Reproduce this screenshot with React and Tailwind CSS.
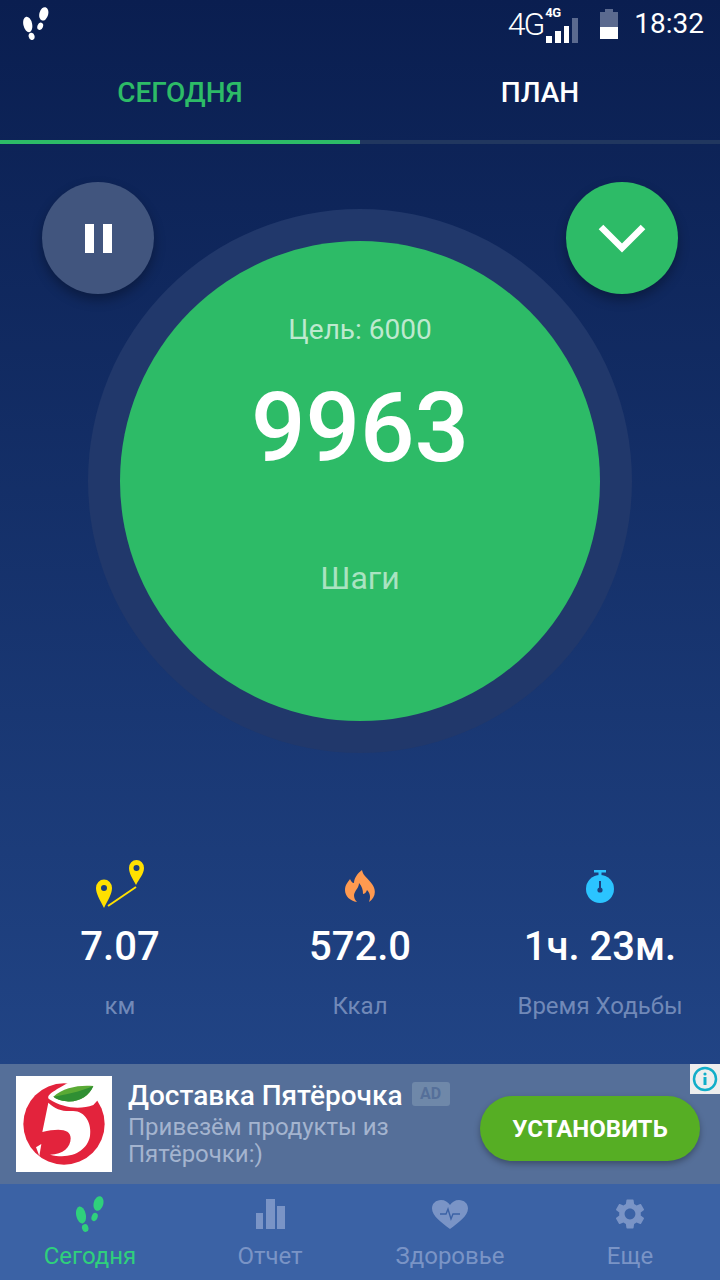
import { MdSettings } from "react-icons/md";

function Steps({ className }) {
  return (
    <svg viewBox="0 0 28 36" className={className} fill="currentColor">
      <ellipse cx="5" cy="19" rx="4.8" ry="8.6" transform="rotate(-12 5 19)" />
      <ellipse cx="9.2" cy="32" rx="3.2" ry="4" transform="rotate(-15 9.2 32)" />
      <ellipse cx="22.5" cy="7.5" rx="4.8" ry="7.5" transform="rotate(15 22.5 7.5)" />
      <ellipse cx="18.6" cy="21" rx="3" ry="4.2" transform="rotate(20 18.6 21)" />
    </svg>
  );
}

function Logo() {
  return (
    <svg viewBox="48 48 288 288" className="w-24 h-24 shrink-0 bg-white">
      <circle cx="192" cy="192" r="122" fill="#e3233c" />
      <path d="M150 70 C180 62 235 60 330 80 L280 135 C240 150 190 145 148 118 C138 108 150 98 205 68 Z" fill="#fff" />
      <path d="M145 128 C165 148 190 155 215 153 C255 150 276 190 270 228 C262 272 215 300 150 284 C190 284 212 262 212 235 C212 208 180 203 127 216 Z" fill="#fff" />
      <path d="M108 262 L124 252 L118 288 Z" fill="#fff" />
      <path d="M160 110 C190 82 240 74 280 78 C268 108 235 128 200 124 C182 122 170 118 160 110 Z" fill="#5aaa35" />
      <path d="M160 110 C195 105 240 95 280 78 C268 108 235 128 200 124 C182 122 170 118 160 110 Z" fill="#2f8f33" />
    </svg>
  );
}

function Stat({ icon, value, label }) {
  return (
    <div className="flex flex-col items-center">
      <div className="h-12 flex items-end justify-center">{icon}</div>
      <div className="mt-[15px] text-[40px] leading-[48px] font-medium text-white">{value}</div>
      <div className="mt-[19px] text-2xl leading-8 text-[#7189b8]">{label}</div>
    </div>
  );
}

function NavItem({ icon, label, active }) {
  return (
    <div className={`flex flex-col items-center ${active ? "text-[#2fd07c]" : "text-[#7a94c6]"}`}>
      <div className="h-[38px] flex items-center justify-center">{icon}</div>
      <div className="mt-[7px] text-2xl leading-8">{label}</div>
    </div>
  );
}

export default function App() {
  return (
    <div className="w-[720px] h-[1280px] flex flex-col overflow-hidden font-[Roboto,sans-serif] bg-gradient-to-b from-[#0a1e50] to-[#264c90]">
      {/* Status bar */}
      <div className="h-12 flex items-center justify-between pl-[22px] pr-4 text-white">
        <Steps className="w-7 h-[33px] mt-[-1px]" />
        <div className="flex items-center">
          <span className="text-[32px] leading-none font-light tracking-[-2px] mr-[2px]">4G</span>
          <div className="relative w-[38px] h-9">
            <span className="absolute left-0 top-0 text-[13px] leading-none font-bold tracking-[-0.5px]">4G</span>
            <div className="absolute left-[1px] bottom-[-1px] flex items-end gap-[3px]">
              <div className="w-[6px] h-[7px] bg-white" />
              <div className="w-[6px] h-[12px] bg-white" />
              <div className="w-[5px] h-[17px] bg-white" />
              <div className="w-[6px] h-[25px] bg-[#5b6a8f]" />
            </div>
          </div>
          <div className="ml-[17px] w-[18px] h-[30px] flex flex-col items-center">
            <div className="w-2 h-[3px] bg-[#5b6a8f]" />
            <div className="w-full h-[15px] bg-[#5b6a8f]" />
            <div className="w-full h-3 bg-white" />
          </div>
          <span className="ml-4 text-[28px] leading-none">18:32</span>
        </div>
      </div>

      {/* Tabs */}
      <div className="h-24 grid grid-cols-2 shrink-0">
        <div className="flex items-center justify-center pb-[3px] border-b-4 border-[#2dbb67] text-[28px] font-medium text-[#2dbb67]">
          СЕГОДНЯ
        </div>
        <div className="flex items-center justify-center pb-[3px] border-b-4 border-[#21375f] text-[28px] font-medium text-white">
          ПЛАН
        </div>
      </div>

      {/* Hero */}
      <div className="relative flex justify-center pt-[65px]">
        <div className="w-[544px] h-[544px] rounded-full bg-[#21386b] flex items-center justify-center">
          <div className="w-[480px] h-[480px] rounded-full bg-[#2dbb67] flex flex-col items-center text-white">
            <div className="mt-[71px] text-[28px] leading-9 text-white/70">Цель: 6000</div>
            <div className="mt-[24px] text-[96px] leading-[112px] font-medium">9963</div>
            <div className="mt-[74px] text-[32px] leading-10 text-white/60">Шаги</div>
          </div>
        </div>
        <button className="absolute left-[42px] top-[38px] w-28 h-28 rounded-full bg-[#41557e] shadow-[0_6px_12px_rgba(0,0,0,0.3)] flex items-center justify-center gap-[9px]">
          <span className="w-[9px] h-[29px] bg-white" />
          <span className="w-[9px] h-[29px] bg-white" />
        </button>
        <button className="absolute right-[42px] top-[38px] w-28 h-28 rounded-full bg-[#2dbb67] shadow-[0_6px_12px_rgba(0,0,0,0.3)] flex items-center justify-center">
          <svg width="48" height="30" viewBox="0 0 48 30" fill="none">
            <path d="M3 4 L24 25 L45 4" stroke="#fff" strokeWidth="6.5" />
          </svg>
        </button>
      </div>

      {/* Stats */}
      <div className="mt-[107px] grid grid-cols-3">
        <Stat
          value="7.07"
          label="км"
          icon={
            <svg width="50" height="48" viewBox="0 0 50 48">
              <line x1="13" y1="46" x2="41" y2="27" stroke="#ffe000" strokeWidth="2" />
              <path fillRule="evenodd" d="M9 48 C5 40 1 34 1 28 A8 8.5 0 0 1 17 28 C17 34 13 40 9 48 Z M9 25 A3 3 0 1 0 9 31 A3 3 0 1 0 9 25 Z" fill="#ffe000" />
              <path fillRule="evenodd" d="M41 25 C38 19 34 14 34 8 A7.5 8 0 0 1 49 8 C49 14 44 19 41 25 Z M41.5 5 A3 3 0 1 0 41.5 11 A3 3 0 1 0 41.5 5 Z" fill="#ffe000" />
            </svg>
          }
        />
        <Stat
          value="572.0"
          label="Ккал"
          icon={
            <svg width="32" height="32" viewBox="0 0 32 32" className="mb-[6px]">
              <path d="M18 0 C19 6 24 8 28 14 C33 21 31 28 25 32 C27 27 26 23 23 20 C22 23 20 24 19 24 C19 20 18 16 15 13 C15 18 11 20 10 25 C10 28 11 30 13 32 C6 31 1 26 1 20 C1 15 4 12 6 9 C7 11 8 13 10 13 C10 8 14 3 18 0 Z" fill="#ff9a50" />
            </svg>
          }
        />
        <Stat
          value="1ч. 23м."
          label="Время Ходьбы"
          icon={
            <svg width="28" height="33" viewBox="0 0 28 33" className="mb-[5px]">
              <rect x="8" y="0" width="12" height="2.5" fill="#2bc4ff" />
              <rect x="12.5" y="2" width="3" height="4" fill="#2bc4ff" />
              <ellipse cx="14" cy="19" rx="14" ry="14" fill="#2bc4ff" />
              <rect x="13" y="11" width="2" height="8" fill="#1d3f7d" />
              <circle cx="14" cy="20" r="2.6" fill="#1d3f7d" />
            </svg>
          }
        />
      </div>

      {/* Ad */}
      <div className="relative mt-auto h-[120px] shrink-0 bg-[#556f99] flex items-center pl-4 pr-5">
        <Logo />
        <div className="ml-4 flex-1 min-w-0">
          <div className="flex items-center">
            <span className="text-[28px] leading-8 font-medium text-white">Доставка Пятёрочка</span>
            <span className="ml-[9px] mt-[-4px] w-[38px] h-6 rounded-[3px] bg-[#6f88a9] flex items-center justify-center text-base font-bold text-[#556f99]">
              AD
            </span>
          </div>
          <div className="mt-[2px] text-2xl leading-[27px] text-[#a4b4cf]">
            Привезём продукты из
            <br />
            Пятёрочки:)
          </div>
        </div>
        <button className="w-[220px] h-[65px] mt-[9px] shrink-0 rounded-full bg-[#56ae24] shadow-[0_3px_6px_rgba(0,0,0,0.3)] text-2xl font-bold text-white">
          УСТАНОВИТЬ
        </button>
        <div className="absolute right-0 top-0 w-[30px] h-[30px] bg-[#eeeeee] flex items-center justify-center">
          <svg width="26" height="26" viewBox="0 0 26 26" fill="none">
            <circle cx="13" cy="13" r="11" stroke="#12aec9" strokeWidth="2.5" />
            <circle cx="13" cy="8" r="1.6" fill="#12aec9" />
            <rect x="11.5" y="11" width="3" height="8" fill="#12aec9" />
          </svg>
        </div>
      </div>

      {/* Bottom nav */}
      <div className="h-24 shrink-0 bg-[#3b62a5] grid grid-cols-4 pt-[11px]">
        <NavItem active label="Сегодня" icon={<Steps className="w-7 h-9" />} />
        <NavItem
          label="Отчет"
          icon={
            <svg width="29" height="30" viewBox="0 0 29 30" fill="currentColor">
              <rect x="0" y="14" width="7" height="16" />
              <rect x="10" y="0" width="9" height="30" />
              <rect x="21" y="7" width="8" height="23" />
            </svg>
          }
        />
        <NavItem
          label="Здоровье"
          icon={
            <svg width="36" height="29" viewBox="0 0 36 29">
              <path d="M18 29 C10 23 0 16 0 8.5 C0 3.5 4 0 9 0 C13 0 16 2 18 5 C20 2 23 0 27 0 C32 0 36 3.5 36 8.5 C36 16 26 23 18 29 Z" fill="currentColor" />
              <path d="M8 14 H14 L16 9 L19 19 L21 14 H28" fill="none" stroke="#3b62a5" strokeWidth="1.4" />
            </svg>
          }
        />
        <NavItem label="Еще" icon={<MdSettings size={36} />} />
      </div>
    </div>
  );
}
